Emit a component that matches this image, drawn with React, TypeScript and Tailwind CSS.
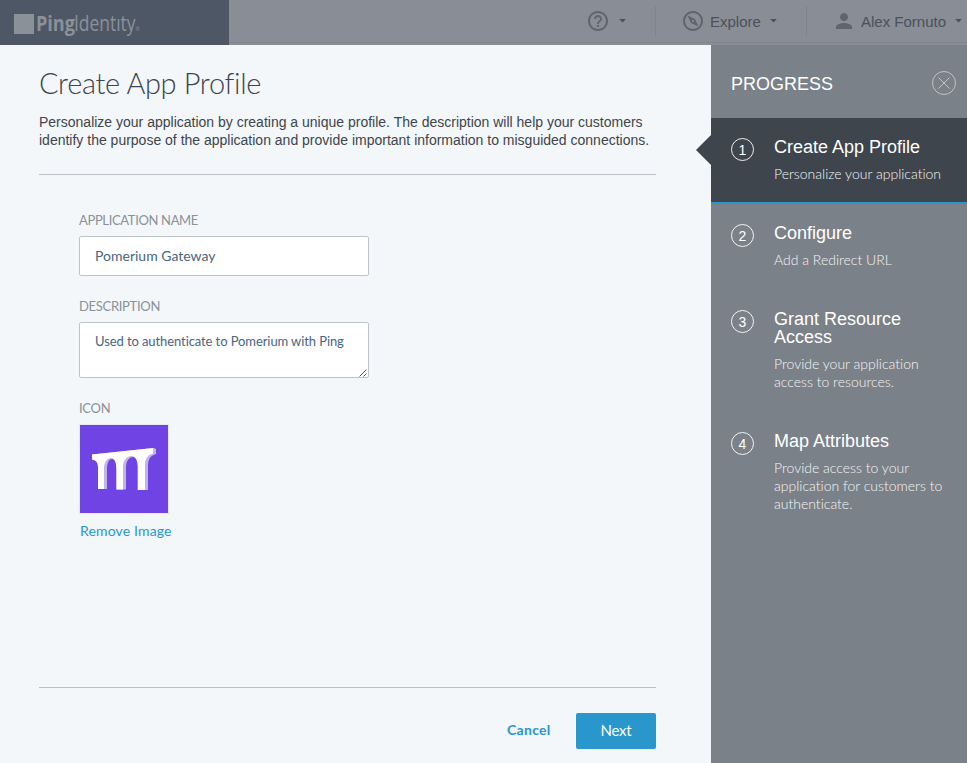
import type { ReactNode } from 'react';
import { MdHelpOutline, MdOutlineExplore, MdPerson } from 'react-icons/md';

const arial = "font-['Liberation_Sans',Arial,sans-serif]";

function Caret() {
  return (
    <svg width="7" height="4" viewBox="0 0 7 4" className="block shrink-0">
      <path d="M0.2 0h6.6L3.5 3.6z" fill="#4a515b" />
    </svg>
  );
}

function Line({ children }: { children: ReactNode }) {
  return <span className="block whitespace-nowrap">{children}</span>;
}

function Header() {
  return (
    <header className="flex h-[45px] shrink-0 bg-[#898d95]">
      <div className="flex w-[229px] shrink-0 items-start bg-[#4e5766] pl-[14px] pt-[14px]">
        <div className="h-5 w-5 bg-[#8b9198]" />
        <div className="ml-[2px] -mt-[5px] flex h-7 w-[104px] items-start font-['Open_Sans',sans-serif] text-[21px] leading-7 text-[#8b9198]">
          <div className="w-[38px] shrink-0 origin-left scale-x-[0.86] whitespace-nowrap font-bold">Ping</div>
          <div className="flex w-[66px] shrink-0 origin-left scale-x-[0.83] items-start whitespace-nowrap">
            <span>Identıty</span>
            <span className="mt-[16px] text-[6px] leading-[8px]">®</span>
          </div>
        </div>
      </div>
      <div className={`flex flex-1 flex-col ${arial}`}>
        <div className="flex h-[42px] items-center text-[15px] text-[#4a515b]">
          <MdHelpOutline className="ml-[357px] h-6 w-6 shrink-0 text-[#5f656e]" />
          <div className="ml-[9px]"><Caret /></div>
          <div className="ml-[29px] h-[30px] w-px shrink-0 bg-[#7f848c]" />
          <MdOutlineExplore className="ml-[25px] h-6 w-6 shrink-0 -scale-x-100 text-[#5f656e]" />
          <span className="ml-[5px] mt-[2px] w-[51px] whitespace-nowrap">Explore</span>
          <div className="ml-[9px]"><Caret /></div>
          <div className="ml-[29px] h-[30px] w-px shrink-0 bg-[#7f848c]" />
          <MdPerson className="ml-[25px] h-6 w-6 shrink-0 text-[#5f656e]" />
          <span className="ml-[5px] mt-[2px] w-[85px] whitespace-nowrap">Alex Fornuto</span>
          <div className="ml-[9px]"><Caret /></div>
        </div>
        <div className="h-px bg-[#81858d]" />
      </div>
    </header>
  );
}

function AppIcon() {
  return (
    <svg width="88" height="88" viewBox="0 0 88 88" className="block">
      <rect width="88" height="88" fill="#7044e4" />
      <path d="M12 29.5L74 23L76 24V29C70 30.5 68 35 68 41V65H58V42C58 36 56 32 53 32C49 32 46 36 46 43V64.5H37V44C37 38 35 34 32 34C29 34 27 38 27 44V64H18V42C18 37 15.5 35 12 34.5Z" fill="#c2b2ed" />
      <path d="M12 29.5L73 23V28.5C67.5 30 65 34 65 40V65H57.7V42C57.7 35 55.5 31 51.5 31C46 31 43 36 43 43V64.5H36.3V44C36.3 37 34.5 33 31 33C27 33 24 37 24 44V64H18V42C18 37 15.5 35 12 34.5Z" fill="#fff" />
    </svg>
  );
}

function Main() {
  return (
    <main className="flex w-[711px] shrink-0 flex-col bg-[#f3f7fa] pl-[39px] pr-[55px] font-['Lato',sans-serif] [font-variant-ligatures:none]">
      <h1 className="mt-[19px] h-[38px] whitespace-nowrap text-[29px] font-light leading-[38px] tracking-[-0.35px] text-[#3e454c]">Create App Profile</h1>
      <p className={`mt-[11px] ${arial} text-[14px] leading-[18px] text-[#3e454c]`}>
        <Line>Personalize your application by creating a unique profile. The description will help your customers</Line>
        <Line>identify the purpose of the application and provide important information to misguided connections.</Line>
      </p>
      <div className="mt-[25px] h-px bg-[#bcc1c7]" />
      <div className="flex flex-col pl-10">
        <label className="mt-[36px] h-[18px] text-[13px] leading-[18px] tracking-[-0.35px] text-[#8b9198]">APPLICATION NAME</label>
        <div className="mt-[7px] flex h-10 w-[290px] items-center rounded-[2px] border border-[#bfc4ca] bg-white pb-[2px] pl-[15px] text-[14px] text-[#4b6480]">
          <span className="whitespace-nowrap">Pomerium Gateway</span>
        </div>
        <label className="mt-[21px] h-[18px] text-[13px] leading-[18px] tracking-[-0.3px] text-[#8b9198]">DESCRIPTION</label>
        <div className="mt-[7px] flex h-14 w-[290px] items-start rounded-[2px] border border-[#bfc4ca] bg-white pl-[15px] pt-[10px] text-[13px] leading-[18px] tracking-[-0.09px] text-[#4b6480]">
          <span className="-mt-px w-[264px] whitespace-nowrap">Used to authenticate to Pomerium with Ping</span>
          <svg width="8" height="8" viewBox="0 0 8 8" className="mt-[36px] block shrink-0">
            <path d="M0.5 7.5L7.5 0.5M4.5 7.5L7.5 4.5" stroke="#555" strokeWidth="1" />
          </svg>
        </div>
        <label className="mt-[21px] h-[18px] text-[13px] leading-[18px] tracking-[-0.3px] text-[#8b9198]">ICON</label>
        <div className="mt-[7px] h-[90px] w-[90px] border border-[#e7e9f2]"><AppIcon /></div>
        <a className="ml-px mt-[7px] h-5 whitespace-nowrap text-[14px] leading-5 tracking-[0.15px] text-[#2996cc]">Remove Image</a>
      </div>
      <div className="mt-[146px] h-px shrink-0 bg-[#bcc1c7]" />
      <div className="mt-[25px] flex h-9 items-center justify-end">
        <button className="-mt-[3px] mr-[25px] w-[44px] whitespace-nowrap text-left text-[14px] font-bold tracking-[0.3px] text-[#2996cc]">Cancel</button>
        <button className="flex h-9 w-20 items-center justify-center rounded-[2px] bg-[#2996cc] pb-px text-[15px] tracking-[-0.2px] text-white">Next</button>
      </div>
    </main>
  );
}

interface StepProps {
  n: number;
  title: string[];
  lines: string[];
  className: string;
}

function Step({ n, title, lines, className }: StepProps) {
  return (
    <section className={`flex pl-5 pt-5 ${className}`}>
      <div className={`flex h-[23px] w-[23px] shrink-0 items-center justify-center rounded-full border border-white/90 pt-px text-[14px] leading-[18px] text-white ${arial}`}>{n}</div>
      <div className="ml-5">
        <h3 className={`${arial} text-[18px] leading-[18px] text-white`}>
          {title.map((t) => <Line key={t}>{t}</Line>)}
        </h3>
        <p className="mt-[9px] text-[14px] font-light leading-[18px] text-[#f4f5f6]">
          {lines.map((t) => <Line key={t}>{t}</Line>)}
        </p>
      </div>
    </section>
  );
}

function Sidebar() {
  return (
    <aside className="flex flex-1 flex-col bg-[#7b8188] font-['Lato',sans-serif] [font-variant-ligatures:none]">
      <div className="flex h-[73px] shrink-0 items-center pl-5 pr-[10px] pt-[3px]">
        <h2 className={`flex-1 pt-[2px] ${arial} text-[18px] text-white`}>PROGRESS</h2>
        <svg width="26" height="26" viewBox="0 0 26 26" fill="none" stroke="#bfc3c7">
          <circle cx="13" cy="13" r="11.5" />
          <path d="M7.5 7.5l11 11M18.5 7.5l-11 11" />
        </svg>
      </div>
      <div className="relative">
        <div className="absolute left-[-15px] top-[17px] h-[30px] w-[15px] bg-[#3e454c] [clip-path:polygon(100%_0,0_50%,100%_100%)]" />
        <Step n={1} title={['Create App Profile']} lines={['Personalize your application']} className="h-[86px] border-b-2 border-[#2996cc] bg-[#3e454c]" />
      </div>
      <Step n={2} title={['Configure']} lines={['Add a Redirect URL']} className="h-[86px]" />
      <Step n={3} title={['Grant Resource', 'Access']} lines={['Provide your application', 'access to resources.']} className="h-[122px]" />
      <Step n={4} title={['Map Attributes']} lines={['Provide access to your', 'application for customers to', 'authenticate.']} className="h-[122px]" />
    </aside>
  );
}

export default function App() {
  return (
    <div className="flex h-[763px] w-[967px] flex-col overflow-hidden">
      <Header />
      <div className="flex flex-1">
        <Main />
        <Sidebar />
      </div>
    </div>
  );
}
